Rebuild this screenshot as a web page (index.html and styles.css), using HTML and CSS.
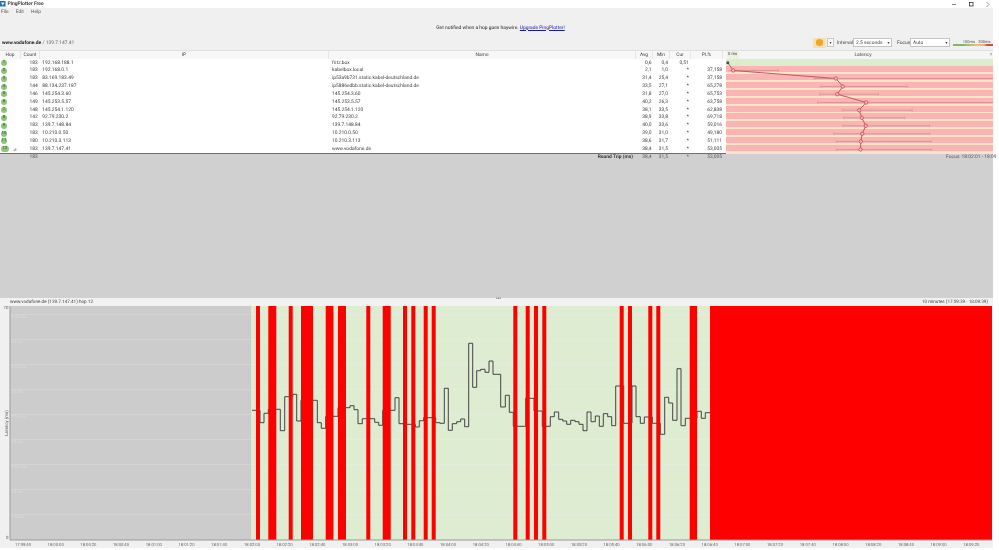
FILE: index.html
```html
<!DOCTYPE html>
<html lang="en">
<head>
<meta charset="utf-8">
<title>PingPlotter Free</title>
<link rel="stylesheet" href="styles.css">
</head>
<body>
<div class="titlebar">
  <svg class="app-icon" viewBox="0 0 6 6"><rect width="6" height="6" fill="#1f6fb5"/><path d="M1 1.5h4L3 4.8z" fill="#e8f2fa"/></svg>
  <span class="app-name">PingPlotter Free</span>
  <div class="win-controls">
    <svg viewBox="0 0 42 8"><path d="M0 4.5h4" stroke="#555" stroke-width=".7"/><rect x="17.5" y="2.5" width="3.5" height="3.5" fill="none" stroke="#333" stroke-width=".8"/><path d="M34.5 2l2.5 2.5-2.5 2.5" fill="none" stroke="#555" stroke-width=".6"/></svg>
  </div>
</div>
<main class="app">
  <nav class="menu"><span>File</span><span>Edit</span><span>Help</span></nav>
  <div class="banner">Get notified when a hop goes haywire.&nbsp;<a href="#">Upgrade PingPlotter!</a></div>
  <div class="toolbar">
    <div class="target"><b>www.vodafone.de</b> / 139.7.147.41</div>
    <div class="controls">
      <div class="pause-group">
        <span class="pause"><i></i></span>
        <span class="caret">▾</span>
      </div>
      <span class="lbl-interval">Interval</span>
      <span class="select sel-interval">2.5 seconds<em>▾</em></span>
      <span class="lbl-focus">Focus</span>
      <span class="select sel-focus">Auto<em>▾</em></span>
      <div class="legend">
        <div class="legend-labels"><span>100ms</span><span>200ms</span></div>
        <div class="legend-bar"></div>
      </div>
    </div>
  </div>

  <div class="table">
    <div class="row head">
      <div class="c-hop">Hop</div><div class="c-count">Count</div><div class="c-ip">IP</div><div class="c-name">Name</div><div class="c-avg">Avg</div><div class="c-min">Min</div><div class="c-cur">Cur</div><div class="c-pl">PL%</div>
      <div class="c-lat"><span class="zero">0 ms</span><span class="lat-title">Latency</span><span class="lat-end">?</span></div>
    </div>
    <div class="body">
      <div class="row"><div class="c-hop"><span class="hop">1</span></div><div class="c-count">183</div><div class="c-ip">192.168.188.1</div><div class="c-name">fritz.box</div><div class="c-avg">0,6</div><div class="c-min">0,4</div><div class="c-cur">0,51</div><div class="c-pl"></div><div class="c-lat good"></div></div>
      <div class="row"><div class="c-hop"><span class="hop">2</span></div><div class="c-count">183</div><div class="c-ip">192.168.0.1</div><div class="c-name">kabelbox.local</div><div class="c-avg">2,1</div><div class="c-min">1,0</div><div class="c-cur">*</div><div class="c-pl">37,158</div><div class="c-lat bad"></div></div>
      <div class="row"><div class="c-hop"><span class="hop">3</span></div><div class="c-count">183</div><div class="c-ip">83.169.183.49</div><div class="c-name">ip53a9b731.static.kabel-deutschland.de</div><div class="c-avg">31,4</div><div class="c-min">25,4</div><div class="c-cur">*</div><div class="c-pl">37,158</div><div class="c-lat bad"></div></div>
      <div class="row"><div class="c-hop"><span class="hop">4</span></div><div class="c-count">144</div><div class="c-ip">88.134.237.187</div><div class="c-name">ip5886edbb.static.kabel-deutschland.de</div><div class="c-avg">33,5</div><div class="c-min">27,1</div><div class="c-cur">*</div><div class="c-pl">65,278</div><div class="c-lat bad"></div></div>
      <div class="row"><div class="c-hop"><span class="hop">5</span></div><div class="c-count">146</div><div class="c-ip">145.254.3.60</div><div class="c-name">145.254.3.60</div><div class="c-avg">31,8</div><div class="c-min">27,0</div><div class="c-cur">*</div><div class="c-pl">65,753</div><div class="c-lat bad"></div></div>
      <div class="row"><div class="c-hop"><span class="hop">6</span></div><div class="c-count">149</div><div class="c-ip">145.253.5.57</div><div class="c-name">145.253.5.57</div><div class="c-avg">40,2</div><div class="c-min">26,3</div><div class="c-cur">*</div><div class="c-pl">63,758</div><div class="c-lat bad"></div></div>
      <div class="row"><div class="c-hop"><span class="hop">7</span></div><div class="c-count">148</div><div class="c-ip">145.254.1.120</div><div class="c-name">145.254.1.120</div><div class="c-avg">38,1</div><div class="c-min">33,5</div><div class="c-cur">*</div><div class="c-pl">62,838</div><div class="c-lat bad"></div></div>
      <div class="row"><div class="c-hop"><span class="hop">8</span></div><div class="c-count">142</div><div class="c-ip">92.79.230.2</div><div class="c-name">92.79.230.2</div><div class="c-avg">38,9</div><div class="c-min">33,8</div><div class="c-cur">*</div><div class="c-pl">69,718</div><div class="c-lat bad"></div></div>
      <div class="row"><div class="c-hop"><span class="hop">9</span></div><div class="c-count">183</div><div class="c-ip">139.7.148.84</div><div class="c-name">139.7.148.84</div><div class="c-avg">40,0</div><div class="c-min">33,6</div><div class="c-cur">*</div><div class="c-pl">59,016</div><div class="c-lat bad"></div></div>
      <div class="row"><div class="c-hop"><span class="hop">10</span></div><div class="c-count">183</div><div class="c-ip">10.210.0.50</div><div class="c-name">10.210.0.50</div><div class="c-avg">39,0</div><div class="c-min">31,0</div><div class="c-cur">*</div><div class="c-pl">49,180</div><div class="c-lat bad"></div></div>
      <div class="row"><div class="c-hop"><span class="hop">11</span></div><div class="c-count">180</div><div class="c-ip">10.210.3.113</div><div class="c-name">10.210.3.113</div><div class="c-avg">38,6</div><div class="c-min">31,7</div><div class="c-cur">*</div><div class="c-pl">51,111</div><div class="c-lat bad"></div></div>
      <div class="row"><div class="c-hop"><span class="hop wide">12</span><svg class="bars" viewBox="0 0 5 4"><path d="M.5 4V3M2 4V1.5M3.5 4V0" stroke="#555" stroke-width=".7"/></svg></div><div class="c-count">183</div><div class="c-ip">139.7.147.41</div><div class="c-name">www.vodafone.de</div><div class="c-avg">38,4</div><div class="c-min">31,5</div><div class="c-cur">*</div><div class="c-pl">53,005</div><div class="c-lat bad"></div></div>
      <svg class="trace" viewBox="725.5 58.5 267.5 94.2">
        <g class="err">
          <path d="M728 70H778M814 78H992.7M820 86H906.7M819.3 93.7H878M817 102H993M842 109.7H911.7M843.3 117.3H904.3M842.3 125.3H929M833.3 133.3H929.3M835.7 141H930.7M835.7 149H931"/>
          <path class="caps" d="M778 68.5v3M814 76.5v3M906.7 84.5v3M820 84.5v3M878 92.2v3M819.3 92.2v3M817 100.5v3M911.7 108.2v3M842 108.2v3M904.3 115.8v3M843.3 115.8v3M929 123.8v3M842.3 123.8v3M929.3 131.8v3M833.3 131.8v3M930.7 139.5v3M835.7 139.5v3M931 147.5v3M835.7 147.5v3"/>
        </g>
        <polyline class="link" points="727.3,62.3 732.7,70 835.3,78 842.3,86 836.7,93.7 865.7,102 858.7,109.7 861.3,117.3 865.3,125.3 861.7,133.3 860.3,141 860,149"/>
        <rect class="first" x="726" y="61" width="2.6" height="2.6"/>
        <g class="marks">
          <circle cx="732.7" cy="70" r="1.7"/><circle cx="835.3" cy="78" r="1.7"/><circle cx="842.3" cy="86" r="1.7"/><circle cx="836.7" cy="93.7" r="1.7"/><circle cx="865.7" cy="102" r="1.7"/><circle cx="858.7" cy="109.7" r="1.7"/><circle cx="861.3" cy="117.3" r="1.7"/><circle cx="865.3" cy="125.3" r="1.7"/><circle cx="861.7" cy="133.3" r="1.7"/><circle cx="860.3" cy="141" r="1.7"/><circle cx="860" cy="149" r="1.7"/>
        </g>
      </svg>
    </div>
    <div class="row summary">
      <div class="c-hop"></div><div class="c-count">183</div><div class="c-ip"></div><div class="c-name"><b>Round Trip (ms)</b></div><div class="c-avg">38,4</div><div class="c-min">31,5</div><div class="c-cur">*</div><div class="c-pl">53,005</div>
      <div class="c-lat focus">Focus: 18:02:01 - 18:09</div>
    </div>
  </div>

  <div class="spacer"></div>

  <div class="graph-head">
    <span>www.vodafone.de (139.7.147.41) hop 12</span>
    <span class="grip">•••</span>
    <span>10 minutes (17:59:39 - 18:09:39)</span>
  </div>

  <svg class="graph" viewBox="0 306 993 242">
    <rect class="g-idle" x="10" y="306" width="241" height="234"/>
    <rect class="g-live" x="251" y="306" width="459" height="234"/>
    <path class="g-grid-idle" d="M10 314.5H251M10 339.5H251M10 364.5H251M10 389.5H251M10 414.5H251M10 439.5H251M10 464.5H251M10 489.5H251M10 514.5H251"/>
    <path class="g-grid-live" d="M251 314.5H710M251 339.5H710M251 364.5H710M251 389.5H710M251 414.5H710M251 439.5H710M251 464.5H710M251 489.5H710M251 514.5H710"/>
    <path class="g-line" d="M252 410.3H260V422.7H264V413.3H268.3V409.3H280.3V430.7H284.7V396.7H292.7V394.3H296.7V421H301V400.3H317.3V422.7H321.3V428.3H325.7V416.3H338V407.7H350V405.7H354V409.7H358V423.7H362.3V418.7H374.7V422.3H378.7V425.3H382.7V410.3H395V397.7H399V423.7H403V424.3H415.3V427H419.3V420.7H423.7V417.7H435.7V422.7H440V423.3H444.3V388.3H448.3V430.3H452.3V423.7H456.7V421.7H460.7V419H464.7V426.7H468.7V343.3H472.7V387.3H476.7V370.7H480.7V369.3H485V372.3H489V361H493V374.3H500.7V407H505.3V395.3H509.3V412.3H513.3V426.3H525.7V398.3H534V411H542.3V426.3H550.3V416.7H554.3V412H558.7V419.3H562.7V421H566.7V424.3H570.7V420.3H575V421.7H579V424.3H583V430.7H587V412H591V421.7H595.3V416H599.3V426.3H603.3V413.7H607.7V416.7H611.7V425.7H615.7V386H623.7V423.3H632V386H636V416.7H640.3V423.3H644.3V417H652.3V423.3H660.3V434.3H664.7V397.3H668.7V403H672.7V420.3H677V368.7H681V425.7H685.3V418.3H697V411.3H701.3V418.3H705.3V412.7H710"/>
    <g class="g-loss">
      <rect x="256" y="306" width="4" height="234"/><rect x="268.3" y="306" width="8" height="234"/><rect x="288.7" y="306" width="4" height="234"/><rect x="301" y="306" width="12" height="234"/><rect x="325.7" y="306" width="7.7" height="234"/><rect x="338" y="306" width="8" height="234"/><rect x="366.3" y="306" width="4" height="234"/><rect x="382.7" y="306" width="8" height="234"/><rect x="403" y="306" width="4" height="234"/><rect x="411.3" y="306" width="4" height="234"/><rect x="423.7" y="306" width="4" height="234"/><rect x="431.7" y="306" width="4" height="234"/><rect x="513.3" y="306" width="4" height="234"/><rect x="525.7" y="306" width="4" height="234"/><rect x="534" y="306" width="4" height="234"/><rect x="542.3" y="306" width="4" height="234"/><rect x="619.7" y="306" width="4" height="234"/><rect x="628" y="306" width="4" height="234"/><rect x="648.3" y="306" width="4" height="234"/><rect x="656.3" y="306" width="4" height="234"/><rect x="689.7" y="306" width="7.3" height="234"/><rect x="710" y="306" width="282" height="234"/>
    </g>
    <path class="g-axis" d="M10 306V540H992"/>
    <g class="g-ylab">
      <text x="11" y="318">67,5 ms</text><text x="11" y="343">60 ms</text><text x="11" y="368">52,5 ms</text><text x="11" y="393">45 ms</text><text x="11" y="418">37,5 ms</text><text x="11" y="443">30 ms</text><text x="11" y="468">22,5 ms</text><text x="11" y="493">15 ms</text><text x="11" y="518">7,5 ms</text>
    </g>
    <g class="g-tick">
      <text x="8.5" y="309.3" text-anchor="end">70</text><text x="8.5" y="539" text-anchor="end">0</text>
      <text x="0" y="0" text-anchor="middle" transform="translate(8 423) rotate(-90)">Latency (ms)</text>
    </g>
    <g class="g-time" text-anchor="middle">
      <text x="23" y="545.5">17:59:40</text><text x="55.7" y="545.5">18:00:00</text><text x="88.4" y="545.5">18:00:20</text><text x="121" y="545.5">18:00:40</text><text x="153.8" y="545.5">18:01:00</text><text x="186.5" y="545.5">18:01:20</text><text x="219.2" y="545.5">18:01:40</text><text x="252" y="545.5">18:02:00</text><text x="284.6" y="545.5">18:02:20</text><text x="317.3" y="545.5">18:02:40</text><text x="350" y="545.5">18:03:00</text><text x="382.7" y="545.5">18:03:20</text><text x="415.4" y="545.5">18:03:40</text><text x="448" y="545.5">18:04:00</text><text x="480.8" y="545.5">18:04:20</text><text x="513.5" y="545.5">18:04:40</text><text x="546.2" y="545.5">18:05:00</text><text x="579" y="545.5">18:05:20</text><text x="611.6" y="545.5">18:05:40</text><text x="644.3" y="545.5">18:06:00</text><text x="677" y="545.5">18:06:20</text><text x="709.7" y="545.5">18:06:40</text><text x="742.4" y="545.5">18:07:00</text><text x="775" y="545.5">18:07:20</text><text x="807.8" y="545.5">18:07:40</text><text x="840.5" y="545.5">18:08:00</text><text x="873.2" y="545.5">18:08:20</text><text x="906" y="545.5">18:08:40</text><text x="938.6" y="545.5">18:09:00</text><text x="971.3" y="545.5">18:09:20</text>
    </g>
  </svg>
</main>
</body>
</html>
```

FILE: styles.css
```css
html, body { margin: 0; padding: 0; background: #fff; }
body {
  width: 999px;
  height: 550px;
  overflow: hidden;
  font-family: Roboto, "Liberation Sans", sans-serif;
  font-size: 4.9px;
  color: #3c3c3c;
  text-rendering: geometricPrecision;
  filter: blur(0.35px);
}
.titlebar { height: 8px; display: flex; align-items: center; position: relative; background: #fff; }
.app-icon { width: 5.5px; height: 5.5px; margin-right: 2px; }
.app-name { font-size: 5px; color: #222; font-weight: 500; }
.win-controls { margin-left: auto; width: 42px; height: 8px; margin-right: 5px; }
.win-controls svg { display: block; width: 42px; height: 8px; }

.app { width: 993px; height: 540px; background: #f0f0f0; display: flex; flex-direction: column; }

.menu { height: 8px; display: flex; align-items: center; gap: 7px; padding-left: 1px; color: #555; }

.banner { height: 20px; display: flex; align-items: center; justify-content: center; padding: 3px 0 0 8px; color: #222; box-sizing: border-box; }
.banner a { color: #1a1a9c; text-decoration: underline; }

.toolbar { height: 15px; display: flex; align-items: center; justify-content: space-between; padding: 0 0 2px 2px; box-sizing: border-box; }
.target { color: #666; }
.target b { color: #222; }
.controls { display: flex; align-items: center; height: 10px; color: #444; }
.pause-group { display: flex; align-items: center; width: 21px; }
.pause { width: 13px; height: 10px; background: #f7e2ae; display: flex; align-items: center; justify-content: center; }
.pause i { display: block; width: 6.4px; height: 6.4px; border-radius: 50%; background: #f2a52c; }
.caret { width: 7px; height: 9px; background: #fbfbfb; border: .4px solid #c8c8c8; box-sizing: border-box; display: flex; align-items: center; justify-content: center; font-size: 4px; margin-left: 1px; color: #333; }
.lbl-interval { width: 15px; margin-left: 3px; margin-right: 1px; }
.lbl-focus { width: 12px; margin-left: 5px; margin-right: 1px; }
.select { height: 9px; background: #fff; border: .4px solid #c4c4c4; box-sizing: border-box; display: flex; align-items: center; justify-content: space-between; padding: 0 1.5px 0 2px; }
.select em { font-style: normal; font-size: 4px; color: #333; }
.sel-interval { width: 39px; }
.sel-focus { width: 40px; }
.legend { width: 40px; margin-left: 3px; display: flex; flex-direction: column; }
.legend-labels { display: flex; justify-content: flex-end; gap: 3px; font-size: 4px; padding-right: 2.5px; color: #555; line-height: 5px; }
.legend-bar { height: 1.6px; background: linear-gradient(90deg, #7cb868 0 25%, #a9c266 40%, #efbd7a 60%, #efb070 78%, #c9504a 85%); }

.table { display: flex; flex-direction: column; }
.row {
  display: grid;
  grid-template-columns: 21px 19px 289px 307px 17px 17px 21px 32px 2.5px 267.5px;
  height: 7.85px;
  line-height: 9px;
  background: #fff;
  white-space: nowrap;
}
.row .c-lat { grid-column: 10; }
.c-count, .c-avg, .c-min, .c-cur, .c-pl { text-align: right; }
.c-count { padding-right: 2.3px; }
.c-ip { padding-left: 2.3px; }
.c-name { padding-left: 3px; }
.c-avg { padding-right: 1.5px; }
.c-min { padding-right: 2px; }
.c-cur { padding-right: 2.2px; }
.c-pl { padding-right: 1px; }

.head { height: 7.5px; line-height: 8.4px; background: #f7f7f7; border-top: 1px solid #e0e0e0; margin-top: -1px; color: #444; }
.head > div { text-align: center; padding: 0; border-right: .5px solid #e6e6e6; box-sizing: border-box; }
.head .c-hop { justify-content: center; }
.head .c-lat { border: 0; display: flex; justify-content: space-between; align-items: center; background: #f5f5f5; padding: 0 1px; }
.zero { font-size: 4.2px; background: #eaf3e2; padding: 0 1.5px; border-radius: 0 2px 0 0; }
.lat-title { margin-right: 3px; }
.lat-end { font-size: 4px; }

.body { position: relative; }
.good { background: #dcedcc; }
.bad { background: linear-gradient(#f9b5b6 0 6.4px, #fbe5c6 6.4px); }

.hop { display: inline-block; width: 6px; height: 6px; line-height: 6px; margin-left: 1px; border-radius: 3px; background: #8ec47c; color: #245a1a; text-align: center; font-size: 4.4px; }
.hop.wide { width: 7.5px; }
.c-hop { display: flex; align-items: center; }
.bars { width: 4px; height: 3.5px; margin-left: 4px; }

.trace { position: absolute; left: 725.5px; top: 0; width: 267.5px; height: 94.2px; }
.err path { fill: none; stroke: #d98a8c; stroke-width: .8; }
.err .caps { stroke-width: .5; }
.link { fill: none; stroke: #bd5a60; stroke-width: 1; }
.first { fill: #5a3a44; }
.marks circle { fill: #f9b5b6; stroke: #c03f4c; stroke-width: .7; }

.summary { background: #d0d0d0; height: 7.3px; line-height: 7px; border-top: 1.3px solid #6f6f6f; color: #555; }
.summary b { display: block; text-align: right; padding-right: 3px; color: #333; }
.focus { padding-left: 220.5px; box-sizing: border-box; color: #555; }

.spacer { flex: 1; background: #d0d0d0; }

.graph-head { height: 8px; display: flex; justify-content: space-between; align-items: center; padding: 0 5px 0 10px; background: #f2f2f2; position: relative; font-size: 4.6px; color: #444; }
.grip { position: absolute; left: 496px; top: -1px; line-height: 5px; font-size: 5px; color: #333; }

.graph { display: block; width: 993px; height: 242px; overflow: visible; }
.g-idle { fill: #cccccc; }
.g-live { fill: #deecd2; }
.g-grid-idle { fill: none; stroke: #d4d4d4; stroke-width: 1; }
.g-grid-live { fill: none; stroke: #e4eddc; stroke-width: 1; }
.g-line { fill: none; stroke: #333; stroke-width: .9; }
.g-loss rect { fill: #fe0000; }
.g-axis { fill: none; stroke: #999; stroke-width: 1; }
.g-ylab text { font-size: 4.4px; fill: #dadada; }
.g-tick text { font-size: 4.4px; fill: #555; }
.g-time text { font-size: 4.2px; fill: #6a6a6a; }
```
